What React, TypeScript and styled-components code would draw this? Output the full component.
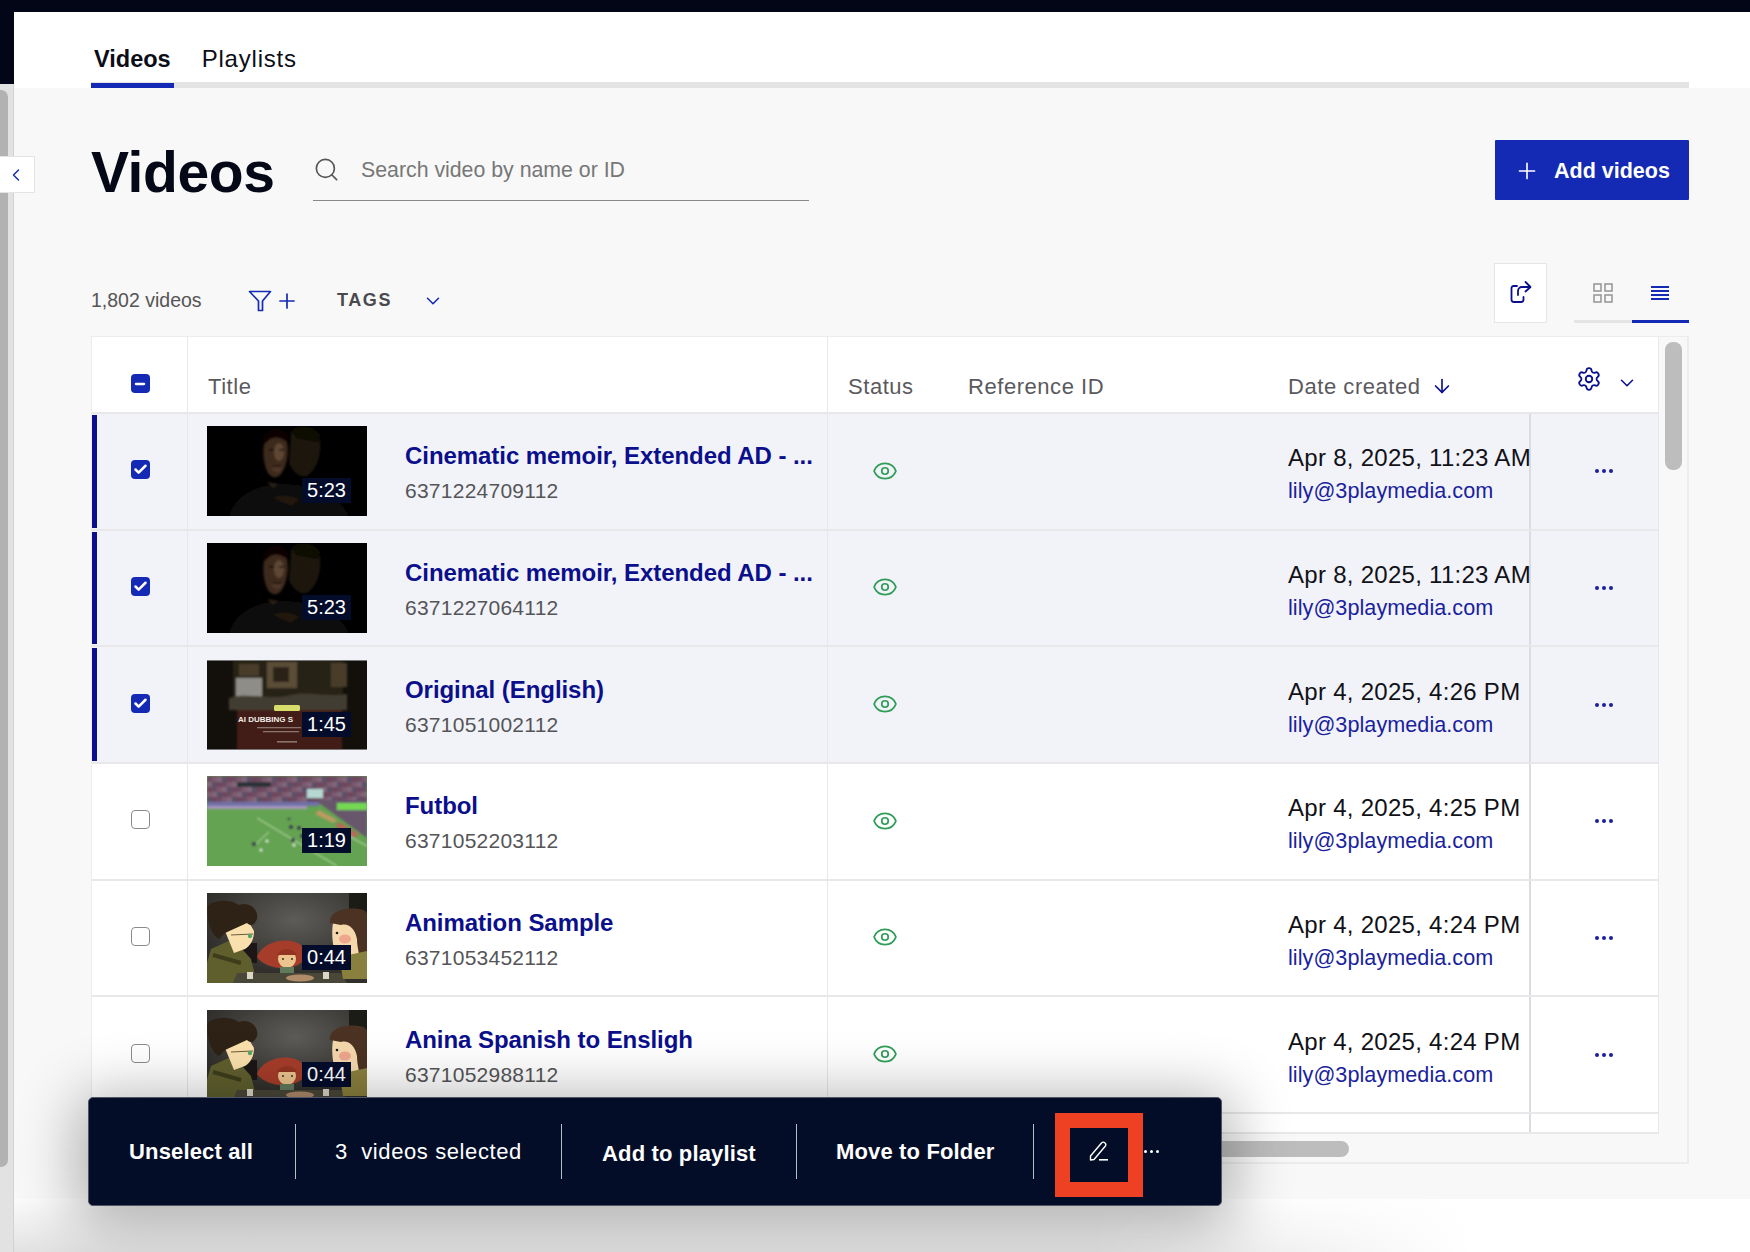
import styled, { createGlobalStyle } from "styled-components";
import { ArrowDown, Check, ChevronDown, ChevronLeft, Eye, Minus, Plus, Search, Settings } from "lucide-react";

const BLUE = "#152ab4";
const NAVY = "#0b0f8c";
const FONT = `"Liberation Sans", Arial, sans-serif`;

const rows = [
  { title: "Cinematic memoir, Extended AD - ...", id: "6371224709112", time: "5:23", date: "Apr 8, 2025, 11:23 AM", thumb: "man", selected: true },
  { title: "Cinematic memoir, Extended AD - ...", id: "6371227064112", time: "5:23", date: "Apr 8, 2025, 11:23 AM", thumb: "man", selected: true },
  { title: "Original (English)", id: "6371051002112", time: "1:45", date: "Apr 4, 2025, 4:26 PM", thumb: "dubbing", selected: true },
  { title: "Futbol", id: "6371052203112", time: "1:19", date: "Apr 4, 2025, 4:25 PM", thumb: "soccer", selected: false },
  { title: "Animation Sample", id: "6371053452112", time: "0:44", date: "Apr 4, 2025, 4:24 PM", thumb: "cartoon", selected: false },
  { title: "Anina Spanish to Ensligh", id: "6371052988112", time: "0:44", date: "Apr 4, 2025, 4:24 PM", thumb: "cartoon", selected: false },
];

const crowdColors = ["#6a4d62", "#7a4a62", "#5a5068", "#7f5a70", "#5f5f74", "#70445c", "#80687a"];

const GlobalStyle = createGlobalStyle`
  html, body {
    margin: 0;
    padding: 0;
    background: #f8f8f8;
  }
  * {
    box-sizing: border-box;
  }
`;

const Page = styled.div`
  position: relative;
  width: 1750px;
  height: 1252px;
  overflow: hidden;
  font-family: ${FONT};
  color: #0b0d17;
  background: #f8f8f8;
`;

const TopBar = styled.div`
  height: 12px;
  background: #020617;
`;

const Shell = styled.div`
  display: flex;
  height: 1240px;
`;

const Rail = styled.div`
  display: flex;
  flex-direction: column;
  width: 14px;
  background: #e2e2e2;
  border-right: 1px solid #d2d2d2;
`;

const RailDark = styled.div`
  width: 14px;
  height: 72px;
  background: #020617;
`;

const RailThumb = styled.div`
  width: 8px;
  height: 1077px;
  margin-top: 6px;
  background: #b2b2b2;
  border-radius: 0 7px 7px 0;
`;

const Main = styled.div`
  flex: 1;
  display: flex;
  flex-direction: column;
`;

const TabHeader = styled.div`
  height: 76px;
  padding: 0 61px 0 77px;
  display: flex;
  align-items: flex-end;
  background: #fff;
`;

const Tabs = styled.div`
  flex: 1;
  display: flex;
  height: 50px;
  border-bottom: 6px solid #e4e4e4;
`;

const Tab = styled.div<{ $active?: boolean }>`
  height: 50px;
  padding: 6px 3px 0;
  margin-right: 25px;
  font-size: ${(p) => (p.$active ? "23.5px" : "24px")};
  line-height: 30px;
  font-weight: ${(p) => (p.$active ? 700 : 400)};
  letter-spacing: ${(p) => (p.$active ? "0" : "0.8px")};
  color: #0b0d17;
  border-bottom: 5px solid ${(p) => (p.$active ? BLUE : "transparent")};
`;

const Content = styled.div`
  flex: 1;
  padding: 52px 61px 0 77px;
`;

const TitleRow = styled.div`
  display: flex;
  align-items: center;
  height: 60px;
`;

const PageTitle = styled.h1`
  margin: 0;
  width: 222px;
  padding-top: 4px;
  font-size: 57px;
  font-weight: 700;
  letter-spacing: -0.4px;
  line-height: 60px;
  color: #050816;
`;

const SearchBox = styled.div`
  display: flex;
  align-items: center;
  gap: 21px;
  width: 496px;
  height: 61px;
  border-bottom: 1px solid #8a8a8a;
  color: #555;
`;

const Placeholder = styled.span`
  padding-top: 2px;
  font-size: 21.3px;
  color: #777;
`;

const AddButton = styled.button`
  margin-left: auto;
  display: flex;
  align-items: center;
  gap: 14px;
  width: 194px;
  height: 60px;
  padding: 2px 0 0 19px;
  border: 0;
  border-radius: 1px;
  background: ${BLUE};
  color: #fff;
  font-family: ${FONT};
  font-size: 21.5px;
  font-weight: 700;
`;

const Toolbar = styled.div`
  display: flex;
  align-items: center;
  height: 61px;
  margin-top: 62px;
`;

const ToolbarLeft = styled.div`
  display: flex;
  align-items: center;
  padding-top: 16px;
`;

const VideoCount = styled.span`
  width: 157px;
  font-size: 19.5px;
  color: #555;
`;

const AddFilter = styled.span`
  display: flex;
  margin-left: 3px;
  color: ${BLUE};
`;

const TagsLabel = styled.span`
  margin-left: 38px;
  width: 85px;
  font-size: 18px;
  font-weight: 700;
  letter-spacing: 1.6px;
  color: #4a4a4e;
`;

const ExportBox = styled.div`
  margin-left: auto;
  display: flex;
  align-items: center;
  justify-content: center;
  width: 53px;
  height: 60px;
  padding-bottom: 2px;
  background: #fff;
  border: 1px solid #e6e6e6;
`;

const ViewSwitch = styled.div`
  display: flex;
  margin-left: 27px;
`;

const ViewButton = styled.div<{ $active?: boolean }>`
  display: flex;
  align-items: center;
  justify-content: center;
  width: 57.5px;
  height: 61px;
  padding-top: 4px;
  border-bottom: 3px solid ${(p) => (p.$active ? BLUE : "#e4e4e4")};
`;

const TableFrame = styled.div`
  display: grid;
  grid-template-columns: minmax(0, 1fr) 28px;
  grid-template-rows: 797px 29px;
  height: 828px;
  margin-top: 13px;
  border: 2px solid #ececec;
  border-left-width: 1px;
  border-top-width: 1px;
`;

const Table = styled.div`
  grid-column: 1;
  grid-row: 1;
  display: flex;
  flex-direction: column;
  background: #fff;
  border-right: 1px solid #e8e8ea;
  border-bottom: 2px solid #e8e8ea;
`;

const Row = styled.div<{ $selected?: boolean; $header?: boolean; $filler?: boolean }>`
  display: grid;
  grid-template-columns: 96px 640px 140px 320px 243px 127px;
  flex: ${(p) => (p.$filler ? 1 : "none")};
  height: ${(p) => (p.$header ? "77px" : p.$filler ? "auto" : "116.67px")};
  background: ${(p) => (p.$selected ? "#f2f3f8" : "#fff")};
  border-bottom: ${(p) => (p.$filler ? "0" : "2px solid #e8e8ea")};
`;

const Cell = styled.div<{ $divider?: "light" | "strong" }>`
  position: relative;
  display: flex;
  align-items: center;
  min-width: 0;
  border-right: ${(p) => (p.$divider === "strong" ? "2px solid #dcdce0" : p.$divider === "light" ? "1px solid #e8e8ea" : "0")};
`;

const CheckCell = styled(Cell)<{ $selected?: boolean }>`
  justify-content: center;
  padding: 0 0 3px 1px;

  &::before {
    content: "";
    display: ${(p) => (p.$selected ? "block" : "none")};
    position: absolute;
    left: 0;
    top: 1px;
    bottom: 1px;
    width: 5px;
    background: ${NAVY};
  }
`;

const HeadCell = styled.div<{ $divider?: boolean; $padLeft?: number }>`
  display: flex;
  align-items: flex-end;
  padding: 0 0 12px ${(p) => p.$padLeft ?? 0}px;
  font-size: 22px;
  letter-spacing: 0.55px;
  line-height: 26px;
  color: #5a5a5e;
  border-right: ${(p) => (p.$divider ? "1px solid #e8e8ea" : "0")};
`;

const HeadCheckCell = styled(HeadCell)`
  justify-content: center;
  padding: 0 0 19px 1px;
`;

const SortArrow = styled(ArrowDown)`
  margin: 0 0 3px 10px;
  color: ${NAVY};
`;

const SettingsCell = styled.div`
  display: flex;
  align-items: flex-end;
  padding: 0 0 20px 45px;
  color: ${NAVY};
`;

const SettingsChevron = styled(ChevronDown)`
  margin: 0 0 -2px 14px;
`;

const Box = styled.span<{ $on?: boolean }>`
  display: flex;
  align-items: center;
  justify-content: center;
  width: 19px;
  height: 19px;
  border-radius: 4px;
  background: ${(p) => (p.$on ? BLUE : "#fff")};
  border: ${(p) => (p.$on ? "0" : "1.5px solid #8b8b8b")};
  color: #fff;
`;

const ThumbWrap = styled.div`
  position: relative;
  flex: none;
  width: 160px;
  height: 90px;
  margin-left: 19px;
  overflow: hidden;
  background: #000;
`;

const Duration = styled.span`
  position: absolute;
  right: 16px;
  bottom: 13px;
  padding: 0 5px;
  height: 25px;
  font-size: 20px;
  line-height: 25px;
  color: #fff;
  background: #030c2a;
`;

const TitleBlock = styled.div`
  display: flex;
  flex-direction: column;
  margin-left: 38px;
  padding-top: 5px;
`;

const VideoTitle = styled.a`
  font-size: 24px;
  line-height: 35px;
  font-weight: 700;
  letter-spacing: -0.06px;
  white-space: nowrap;
  color: ${NAVY};
`;

const VideoId = styled.span`
  font-size: 21px;
  line-height: 36px;
  letter-spacing: 0.25px;
  color: #555558;
`;

const StatusCell = styled(Cell)`
  padding: 0 0 1px 44px;
  color: #2f9d58;
`;

const DateBlock = styled.div`
  display: flex;
  flex-direction: column;
  padding-top: 6px;
`;

const DateText = styled.span`
  font-size: 24px;
  line-height: 33px;
  letter-spacing: 0.28px;
  white-space: nowrap;
  color: #111118;
`;

const Email = styled.a`
  font-size: 21.6px;
  line-height: 33px;
  letter-spacing: 0.05px;
  color: #1a1f9e;
`;

const MoreCell = styled(Cell)`
  justify-content: center;
  gap: 3px;
  padding: 0 0 0 18px;
`;

const Dot = styled.span<{ $light?: boolean }>`
  width: ${(p) => (p.$light ? 3 : 4)}px;
  height: ${(p) => (p.$light ? 3 : 4)}px;
  border-radius: 50%;
  background: ${(p) => (p.$light ? "#fff" : "#1a1f9e")};
`;

const VTrack = styled.div`
  grid-column: 2;
  grid-row: 1;
  padding: 5px 5px 0 6px;
`;

const VThumb = styled.div`
  height: 128px;
  border-radius: 8px;
  background: #bdbdbd;
`;

const HTrack = styled.div`
  grid-column: 1 / span 2;
  grid-row: 2;
  padding: 7px 0 0 900px;
`;

const HThumb = styled.div`
  width: 357px;
  height: 16px;
  border-radius: 8px;
  background: #bdbdbd;
`;

const FooterStrip = styled.div`
  flex: none;
  height: 53px;
  background:
    linear-gradient(90deg, rgba(255, 255, 255, 0) 62%, #fff 84%),
    linear-gradient(180deg, #fbfbfb 0%, #e2e2e2 100%);
`;

const CollapseButton = styled.div`
  position: absolute;
  left: 0;
  top: 156px;
  display: flex;
  align-items: center;
  justify-content: center;
  width: 35px;
  height: 37px;
  padding-right: 2px;
  background: #fff;
  border: 1px solid #e4e4e4;
  border-left: 0;
  color: ${BLUE};
`;

const ActionBar = styled.div`
  position: absolute;
  left: 88px;
  top: 1097px;
  display: flex;
  align-items: center;
  width: 1134px;
  height: 109px;
  background: #040d28;
  border: 1px solid #50566a;
  border-radius: 5px;
  box-shadow: 0 8px 60px 10px rgba(0, 0, 0, 0.3);
  color: #fff;
`;

const BarSection = styled.div<{ $w: number; $pad: number; $drop?: number; $bold?: boolean }>`
  flex: none;
  display: flex;
  align-items: center;
  width: ${(p) => p.$w}px;
  height: 55px;
  padding: ${(p) => p.$drop ?? 0}px 0 0 ${(p) => p.$pad}px;
  border-right: 1px solid #b8bcc8;
  font-size: 22px;
  font-weight: ${(p) => (p.$bold ? 700 : 400)};
  letter-spacing: ${(p) => (p.$bold ? "0.15px" : "0.6px")};
  white-space: pre;
`;

const MarkedAction = styled.div`
  flex: none;
  display: flex;
  align-items: center;
  justify-content: center;
  width: 88px;
  height: 84px;
  margin: 7px 0 0 21px;
  padding: 0 0 8px 0;
  border: 15px solid #ee4023;
`;

const BarDots = styled.div`
  display: flex;
  gap: 3px;
  padding: 0 0 1px 1px;
`;

const ManThumb = () => (
  <svg width="160" height="90" viewBox="0 0 160 90">
    <defs>
      <filter id="soft"><feGaussianBlur stdDeviation="1.2" /></filter>
    </defs>
    <rect width="160" height="90" fill="#000" />
    <g filter="url(#soft)">
      <path d="M22 90 C28 68 52 58 76 58 C104 58 132 68 142 90 Z" fill="#0c0a08" />
      <path d="M84 6 C92 2 108 2 113 14 C115 28 110 44 100 50 C92 52 86 46 82 38 Z" fill="#1a120c" />
      <path d="M84 4 C92 -2 108 -2 114 10 L110 16 L90 12 Z" fill="#090705" />
      <path d="M58 14 C62 8 76 8 80 16 C82 26 80 40 74 48 C70 53 64 52 61 47 C56 38 55 24 58 14 Z" fill="#3e291d" />
      <ellipse cx="72" cy="26" rx="5" ry="9" fill="#5f4635" />
      <ellipse cx="70" cy="42" rx="5" ry="4" fill="#4e3728" />
      <path d="M56 14 C58 0 78 -2 82 12 L78 15 C72 10 64 10 58 18 Z" fill="#080504" />
      <rect x="62" y="23" width="5" height="1.6" fill="#120b08" />
      <rect x="72" y="23" width="5" height="1.6" fill="#120b08" />
      <rect x="66" y="39" width="8" height="2" fill="#1c100b" />
      <path d="M66 72 C72 68 84 68 92 74 L84 80 Z" fill="#201710" />
      <path d="M60 56 L72 58 L66 62 Z" fill="#2b2019" />
    </g>
  </svg>
);

const DubbingThumb = () => (
  <svg width="160" height="90" viewBox="0 0 160 90">
    <defs>
      <filter id="softer"><feGaussianBlur stdDeviation="1" /></filter>
    </defs>
    <rect width="160" height="90" fill="#13100c" />
    <g filter="url(#softer)">
      <rect x="26" y="0" width="110" height="46" fill="#262019" />
      <rect x="29" y="18" width="26" height="20" fill="#8f8d88" />
      <rect x="32" y="4" width="20" height="12" fill="#4a3d2c" />
      <rect x="60" y="2" width="30" height="26" fill="#5b4d38" />
      <rect x="66" y="7" width="16" height="15" fill="#2a2015" />
      <rect x="124" y="3" width="16" height="24" fill="#4a3d2c" />
      <path d="M22 38 C40 32 60 40 80 36 C100 30 120 38 140 34 L140 50 L22 50 Z" fill="#423e33" />
      <rect x="30" y="50" width="105" height="40" fill="#421a13" />
    </g>
    <rect x="67" y="45" width="26" height="6" rx="1.5" fill="#d7dc6a" />
    <text x="31" y="62" fontFamily={FONT} fontSize="8" fontWeight="700" fill="#f2efe8">AI DUBBING S</text>
    <g fill="#a89a90" opacity="0.7">
      <rect x="50" y="67" width="44" height="1.3" />
      <rect x="56" y="71" width="36" height="1.3" />
      <rect x="70" y="81" width="20" height="1.6" />
    </g>
    <rect y="0" width="160" height="1" fill="#777" />
    <rect y="89" width="160" height="1" fill="#777" />
  </svg>
);

const SoccerThumb = () => (
  <svg width="160" height="90" viewBox="0 0 160 90">
    <defs>
      <filter id="blurry"><feGaussianBlur stdDeviation="0.9" /></filter>
    </defs>
    <rect width="160" height="90" fill="#64a351" />
    <g filter="url(#blurry)">
      <rect width="160" height="28" fill="#6d4c63" />
      {Array.from({ length: 160 }, (_, i) => (
        <rect
          key={i}
          x={(i % 32) * 5}
          y={Math.floor(i / 32) * 5 + 1}
          width="5"
          height="5"
          fill={crowdColors[(i * 7 + (i % 5) * 3) % crowdColors.length]}
        />
      ))}
      <rect x="100" y="13" width="16" height="9" fill="#b5d8d2" />
      <rect x="30" y="6" width="34" height="5" fill="#2a3038" />
      <rect y="26" width="112" height="4" fill="#7071a8" />
      <rect y="30" width="100" height="3" fill="#a796bf" />
      <path d="M108 24 L160 24 L160 62 Z" fill="#67566c" />
      <rect x="130" y="27" width="30" height="7" fill="#74d852" />
      <path d="M112 34 L130 44 L126 47 L108 38 Z" fill="#c09a62" />
      <path d="M132 46 L152 58 L148 62 L128 50 Z" fill="#b66a58" />
      <path d="M50 42 L130 90 M62 56 C58 60 54 62 50 68 M134 56 L160 70" stroke="#d6ecc8" strokeWidth="0.9" fill="none" />
      <g fill="#3c3c50">
        <circle cx="82" cy="43" r="1.3" /><circle cx="84" cy="51" r="2" /><circle cx="92" cy="52" r="2" />
        <circle cx="95" cy="60" r="2" /><circle cx="86" cy="64" r="2" /><circle cx="47" cy="68" r="2" />
      </g>
      <g fill="#eeeef4">
        <circle cx="60" cy="65" r="1.6" /><circle cx="54" cy="74" r="1.6" /><circle cx="87" cy="69" r="1.6" />
      </g>
    </g>
  </svg>
);

const CartoonThumb = () => (
  <svg width="160" height="90" viewBox="0 0 160 90">
    <defs>
      <filter id="paint"><feGaussianBlur stdDeviation="0.7" /></filter>
      <radialGradient id="spot" cx="0.55" cy="0.3" r="0.6">
        <stop offset="0" stopColor="#5e5c58" />
        <stop offset="1" stopColor="#302f2b" />
      </radialGradient>
    </defs>
    <rect width="160" height="90" fill="url(#spot)" />
    <g filter="url(#paint)">
      <rect x="142" y="0" width="18" height="20" fill="#1d1b18" />
      <rect x="36" y="50" width="14" height="20" fill="#1b1917" />
      <path d="M4 56 L26 46 L44 66 L50 90 L0 90 L0 70 Z" fill="#5f5f2e" />
      <path d="M18 38 L40 26 L47 38 C47 46 44 52 38 56 L27 60 Z" fill="#fae0ad" />
      <path d="M0 14 C6 6 24 6 32 12 C42 8 52 16 50 26 C48 32 44 34 40 30 L18 40 L12 46 C4 42 0 30 0 14 Z" fill="#2f2419" />
      <path d="M24 42 L46 41" stroke="#6a5a3a" strokeWidth="1" />
      <circle cx="43" cy="43" r="2.2" fill="#57a56a" />
      <path d="M6 62 L34 70" stroke="#3d3e1e" strokeWidth="4" />
      <path d="M50 64 C54 52 70 46 84 48 C96 50 100 58 96 68 C88 78 60 78 50 64 Z" fill="#a63e2a" />
      <ellipse cx="80" cy="66" rx="9" ry="9" fill="#ecc48e" />
      <path d="M70 62 C74 54 86 54 90 62 Z" fill="#933424" />
      <circle cx="76" cy="66" r="0.9" fill="#222" />
      <circle cx="85" cy="66" r="0.9" fill="#222" />
      <rect x="73" y="74" width="14" height="6" fill="#627a5c" />
      <path d="M30 80 L134 80 L140 90 L26 90 Z" fill="#4a4638" />
      <ellipse cx="93" cy="85" rx="14" ry="3.5" fill="#b08b6a" />
      <rect x="40" y="79" width="6" height="7" fill="#dcd6c6" />
      <rect x="116" y="79" width="6" height="7" fill="#dcd6c6" />
      <path d="M126 30 L150 28 L152 66 L130 66 C126 56 124 42 126 30 Z" fill="#f6d8ad" />
      <ellipse cx="138" cy="46" rx="6" ry="4.5" fill="#efa68e" />
      <circle cx="130" cy="40" r="1.3" fill="#1b1a16" />
      <path d="M123 30 C122 18 138 14 152 16 C160 17 160 20 160 24 L160 68 C154 66 150 58 150 46 C148 36 142 30 134 32 Z" fill="#4c3321" />
      <path d="M132 64 L160 58 L160 86 L136 86 Z" fill="#8a803e" />
    </g>
  </svg>
);

const thumbs: Record<string, () => React.ReactElement> = {
  man: ManThumb,
  dubbing: DubbingThumb,
  soccer: SoccerThumb,
  cartoon: CartoonThumb,
};

const FilterIcon = () => (
  <svg width="24" height="22" viewBox="0 0 24 22" fill="none" stroke={BLUE} strokeWidth="1.7" strokeLinejoin="round">
    <path d="M1.5 1.5 H22.5 L14.5 11 V20.5 H10.5 V11 Z" />
  </svg>
);

const ExportIcon = () => (
  <svg width="24" height="24" viewBox="0 0 24 24" fill="none" stroke={NAVY} strokeWidth="1.8" strokeLinecap="round" strokeLinejoin="round">
    <path d="M8 6 H4.5 C3.4 6 2.5 6.9 2.5 8 V19.5 C2.5 21 3.5 22 5 22 H12 C13.5 22 14.5 21 14.5 19.5 V17" />
    <path d="M9 15 V11 C9 8.8 10.8 7 13 7 H21" />
    <path d="M16.5 2 L21.5 7 L16.5 11.5" />
  </svg>
);

const GridIcon = () => (
  <svg width="20" height="20" viewBox="0 0 20 20" fill="none" stroke="#9a9a9a" strokeWidth="1.6">
    <rect x="1" y="1" width="7" height="7" />
    <rect x="12" y="1" width="7" height="7" />
    <rect x="1" y="12" width="7" height="7" />
    <rect x="12" y="12" width="7" height="7" />
  </svg>
);

const ListIcon = () => (
  <svg width="20" height="14" viewBox="0 0 20 14" fill="none" stroke={BLUE} strokeWidth="1.8">
    <path d="M1 1 H19 M1 5 H19 M1 9 H19 M1 13 H19" />
  </svg>
);

const PencilIcon = () => (
  <svg width="20" height="20" viewBox="0 0 20 20" fill="none" stroke="#fff" strokeWidth="1.4" strokeLinejoin="round">
    <path d="M1.5 15 L12.5 2 C13.5 1 15 1 16 2 C17 3 17 4.4 16 5.5 L5 18.5 L1.5 19 Z" />
    <path d="M10 18.8 H19" strokeWidth="1.6" />
  </svg>
);

const App = () => {
  return (
    <Page>
      <GlobalStyle />
      <TopBar />
      <Shell>
        <Rail>
          <RailDark />
          <RailThumb />
        </Rail>
        <Main>
          <TabHeader>
            <Tabs>
              <Tab $active>Videos</Tab>
              <Tab>Playlists</Tab>
            </Tabs>
          </TabHeader>
          <Content>
            <TitleRow>
              <PageTitle>Videos</PageTitle>
              <SearchBox>
                <Search size={27} strokeWidth={1.5} />
                <Placeholder>Search video by name or ID</Placeholder>
              </SearchBox>
              <AddButton>
                <Plus size={26} strokeWidth={1.5} />
                Add videos
              </AddButton>
            </TitleRow>
            <Toolbar>
              <ToolbarLeft>
                <VideoCount>1,802 videos</VideoCount>
                <FilterIcon />
                <AddFilter>
                  <Plus size={24} strokeWidth={1.7} />
                </AddFilter>
                <TagsLabel>TAGS</TagsLabel>
                <ChevronDown size={22} strokeWidth={1.7} color={BLUE} />
              </ToolbarLeft>
              <ExportBox>
                <ExportIcon />
              </ExportBox>
              <ViewSwitch>
                <ViewButton>
                  <GridIcon />
                </ViewButton>
                <ViewButton $active>
                  <ListIcon />
                </ViewButton>
              </ViewSwitch>
            </Toolbar>
            <TableFrame>
              <Table>
                <Row $header>
                  <HeadCheckCell $divider>
                    <Box $on>
                      <Minus size={14} strokeWidth={4} />
                    </Box>
                  </HeadCheckCell>
                  <HeadCell $divider $padLeft={20}>Title</HeadCell>
                  <HeadCell $padLeft={20}>Status</HeadCell>
                  <HeadCell>Reference ID</HeadCell>
                  <HeadCell>
                    Date created
                    <SortArrow size={22} strokeWidth={1.8} />
                  </HeadCell>
                  <SettingsCell>
                    <Settings size={26} strokeWidth={1.7} />
                    <SettingsChevron size={22} strokeWidth={1.7} />
                  </SettingsCell>
                </Row>
                {rows.map((row) => {
                  const Thumb = thumbs[row.thumb];
                  return (
                    <Row key={row.id} $selected={row.selected}>
                      <CheckCell $divider="light" $selected={row.selected}>
                        <Box $on={row.selected}>{row.selected && <Check size={15} strokeWidth={4} />}</Box>
                      </CheckCell>
                      <Cell $divider="light">
                        <ThumbWrap>
                          <Thumb />
                          <Duration>{row.time}</Duration>
                        </ThumbWrap>
                        <TitleBlock>
                          <VideoTitle>{row.title}</VideoTitle>
                          <VideoId>{row.id}</VideoId>
                        </TitleBlock>
                      </Cell>
                      <StatusCell>
                        <Eye size={26} strokeWidth={1.6} />
                      </StatusCell>
                      <Cell />
                      <Cell $divider="strong">
                        <DateBlock>
                          <DateText>{row.date}</DateText>
                          <Email>lily@3playmedia.com</Email>
                        </DateBlock>
                      </Cell>
                      <MoreCell>
                        <Dot />
                        <Dot />
                        <Dot />
                      </MoreCell>
                    </Row>
                  );
                })}
                <Row $filler>
                  <Cell $divider="light" />
                  <Cell $divider="light" />
                  <Cell />
                  <Cell />
                  <Cell $divider="strong" />
                  <Cell />
                </Row>
              </Table>
              <VTrack>
                <VThumb />
              </VTrack>
              <HTrack>
                <HThumb />
              </HTrack>
            </TableFrame>
          </Content>
          <FooterStrip />
        </Main>
      </Shell>
      <CollapseButton>
        <ChevronLeft size={20} strokeWidth={1.7} />
      </CollapseButton>
      <ActionBar>
        <BarSection $w={207} $pad={40} $bold>Unselect all</BarSection>
        <BarSection $w={266} $pad={39}>3  videos selected</BarSection>
        <BarSection $w={235} $pad={40} $drop={5} $bold>Add to playlist</BarSection>
        <BarSection $w={237} $pad={39} $bold>Move to Folder</BarSection>
        <MarkedAction>
          <PencilIcon />
        </MarkedAction>
        <BarDots>
          <Dot $light />
          <Dot $light />
          <Dot $light />
        </BarDots>
      </ActionBar>
    </Page>
  );
};

export default App;
